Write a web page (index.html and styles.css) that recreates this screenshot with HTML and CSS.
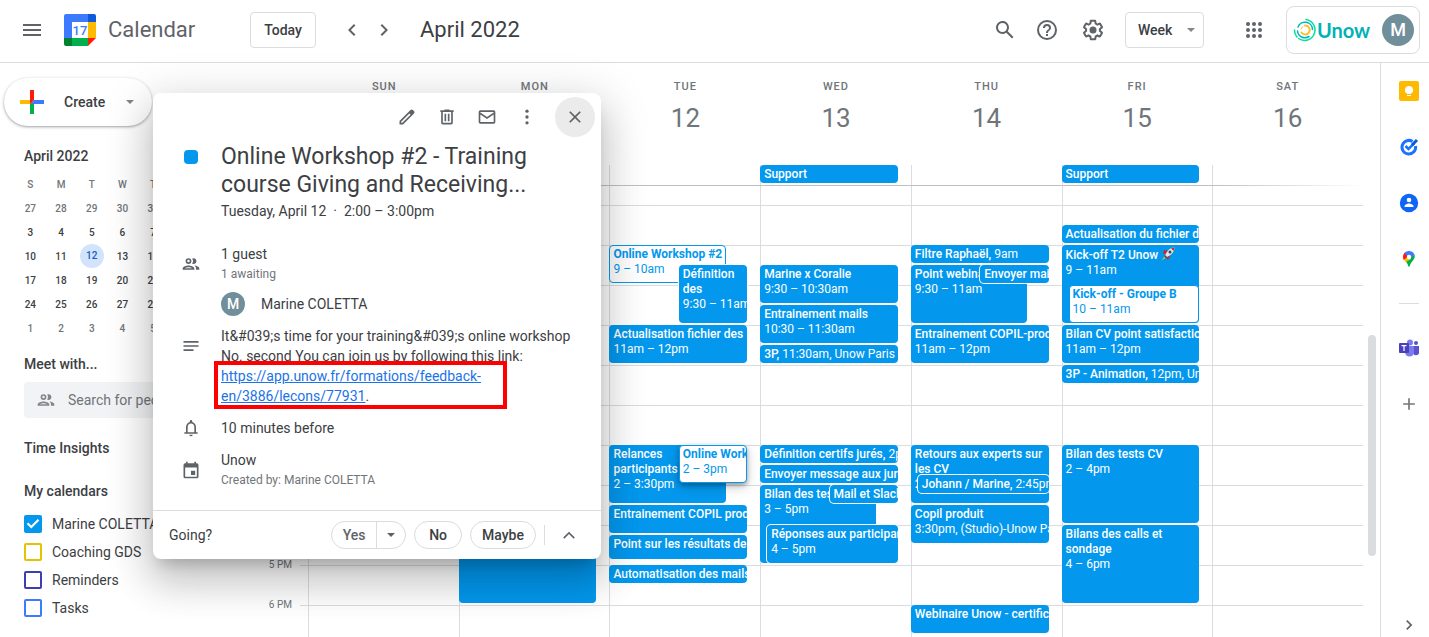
FILE: index.html
```html
<!DOCTYPE html>
<html lang="en">
<head>
    <meta charset="utf-8">
    <title>Calendar - April 2022</title>
    <link rel="stylesheet" href="styles.css">
</head>
<body>
    <header class="topbar">
        <button class="icon-btn" aria-label="Main menu"><svg width="24" height="24" viewBox="0 0 24 24"><path d="M3 18h18v-2H3v2zm0-5h18v-2H3v2zm0-7v2h18V6H3z"/></svg></button>
        <svg class="logo" width="32" height="32" viewBox="0 0 32 32">
            <path fill="#3c7bff" d="M2 0h22v8H8v16H0V2a2 2 0 0 1 2-2z"/>
            <path fill="#0d5bd9" d="M24 0h6a2 2 0 0 1 2 2v6h-8z"/>
            <path fill="#ffba00" d="M24 8h8v16h-8z"/>
            <path fill="#00b04c" d="M8 24h16v8H8z"/>
            <path fill="#00822e" d="M0 24h8v8H2a2 2 0 0 1-2-2z"/>
            <path fill="#ff1a0a" d="M24 24h8l-8 8z"/>
            <path fill="#fff" d="M8 8h16v16H8z"/>
            <text class="logo-day" x="16" y="21" text-anchor="middle">17</text>
        </svg>
        <span class="brand">Calendar</span>
        <button class="box-btn today">Today</button>
        <button class="icon-btn prev" aria-label="Previous week"><svg width="24" height="24" viewBox="0 0 24 24"><path d="M15.400 7.400 14 6l-6 6 6 6 1.400-1.400L10.800 12z"/></svg></button>
        <button class="icon-btn" aria-label="Next week"><svg width="24" height="24" viewBox="0 0 24 24"><path d="M10 6 8.600 7.400 13.200 12l-4.600 4.600L10 18l6-6z"/></svg></button>
        <h1 class="month">April 2022</h1>
        <div class="tools">
            <button class="icon-btn" aria-label="Search"><svg width="24" height="24" viewBox="0 0 24 24"><path d="M20.490 19l-5.730-5.730A6.500 6.500 0 1 0 13.270 14.760L19 20.490 20.490 19zM5 9.500a4.500 4.500 0 1 1 9 0 4.500 4.500 0 0 1-9 0z"/></svg></button>
            <button class="icon-btn help" aria-label="Support"><svg width="24" height="24" viewBox="0 0 24 24"><path d="M11 18h2v-2h-2v2zm1-16a10 10 0 1 0 0 20 10 10 0 0 0 0-20zm0 18a8 8 0 1 1 0-16 8 8 0 0 1 0 16zm0-14a4 4 0 0 0-4 4h2a2 2 0 1 1 4 0c0 2-3 1.750-3 5h2c0-2.250 3-2.500 3-5a4 4 0 0 0-4-4z"/></svg></button>
            <button class="icon-btn gear" aria-label="Settings"><svg width="24" height="24" viewBox="0 0 24 24"><path d="M13.850 22.250h-3.700c-.74 0-1.360-.54-1.450-1.270l-.27-1.890c-.27-.14-.53-.29-.79-.46l-1.800.72c-.7.26-1.470-.03-1.810-.65L2.200 15.530c-.35-.66-.2-1.440.36-1.880l1.530-1.190c-.01-.15-.02-.3-.02-.46 0-.15.01-.31.02-.46l-1.520-1.190c-.59-.45-.74-1.260-.37-1.880l1.850-3.190c.34-.62 1.110-.9 1.790-.63l1.810.73c.26-.17.52-.32.78-.46l.27-1.910c.09-.7.71-1.250 1.440-1.250h3.700c.74 0 1.360.54 1.450 1.270l.27 1.890c.27.14.53.29.79.46l1.800-.72c.71-.26 1.480.03 1.820.65l1.840 3.180c.36.66.2 1.440-.36 1.880l-1.520 1.190c.01.15.02.3.02.46s-.01.31-.02.46l1.520 1.190c.56.45.72 1.230.37 1.860l-1.860 3.220c-.34.62-1.110.9-1.800.63l-1.800-.72c-.26.17-.52.32-.78.46l-.27 1.910c-.1.680-.72 1.220-1.460 1.220zm-3.230-2h2.760l.37-2.550.53-.22c.44-.18.88-.44 1.340-.78l.45-.34 2.380.96 1.380-2.400-2.030-1.580.07-.56c.03-.26.06-.51.06-.78s-.03-.53-.06-.78l-.07-.56 2.030-1.580-1.390-2.400-2.390.96-.45-.35c-.42-.32-.87-.58-1.330-.77l-.52-.22-.37-2.550h-2.760l-.37 2.550-.53.210c-.44.190-.88.440-1.340.790l-.45.330-2.380-.95-1.390 2.390 2.030 1.580-.07.560a7 7 0 0 0-.06.790c0 .260.020.530.060.780l.07.560-2.030 1.580 1.380 2.400 2.390-.96.45.350c.430.330.860.580 1.330.770l.53.220z"/><circle cx="12" cy="12" r="3.500"/></svg></button>
            <div class="view">
                <select aria-label="View"><option>Week</option><option>Day</option><option>Month</option></select>
                <i class="caret"></i>
            </div>
            <button class="icon-btn apps" aria-label="Google apps"><svg width="24" height="24" viewBox="0 0 24 24"><circle cx="6" cy="6" r="2"/><circle cx="12" cy="6" r="2"/><circle cx="18" cy="6" r="2"/><circle cx="6" cy="12" r="2"/><circle cx="12" cy="12" r="2"/><circle cx="18" cy="12" r="2"/><circle cx="6" cy="18" r="2"/><circle cx="12" cy="18" r="2"/><circle cx="18" cy="18" r="2"/></svg></button>
            <div class="account">
                <svg width="24" height="24" viewBox="0 0 24 24" fill="none" stroke-linecap="round">
                    <path stroke="#00e0a8" stroke-width="1.500" d="M13 1.500A10.500 10.500 0 1 1 5.500 20.500M1.500 12a10.500 10.500 0 0 0 2.500 7"/>
                    <path stroke="#00b5b8" stroke-width="1.500" d="M5 9a7.500 7.500 0 0 1 14.500 2.500M4.500 13A7.500 7.500 0 0 0 16 18.500"/>
                    <path stroke="#fbc02d" stroke-width="2" d="M12 7.500a4.500 4.500 0 1 1-3.500 7"/>
                    <path stroke="#fbc02d" stroke-width="1" d="M8 11a4 4 0 0 1 2-2.500"/>
                </svg>
                <span class="org">Unow</span>
                <span class="avatar big">M</span>
            </div>
        </div>
    </header>

    <main class="layout">
        <aside class="sidebar">
            <button class="create">
                <svg width="36" height="36" viewBox="0 0 36 36"><path fill="#00b04c" d="M16 16v14h4V20z"/><path fill="#3c7bff" d="M30 16H20l-4 4h14z"/><path fill="#ffba00" d="M6 16v4h10l4-4z"/><path fill="#ff1a0a" d="M20 16V6h-4v14z"/></svg>
                <span>Create</span>
                <i class="caret"></i>
            </button>
            <h2 class="side-title">April 2022</h2>
            <table class="mini">
                <tr><th>S</th><th>M</th><th>T</th><th>W</th><th>T</th><th>F</th><th>S</th></tr>
                <tr class="out"><td>27</td><td>28</td><td>29</td><td>30</td><td>31</td><td class="in">1</td><td class="in">2</td></tr>
                <tr><td>3</td><td>4</td><td>5</td><td>6</td><td>7</td><td>8</td><td>9</td></tr>
                <tr><td>10</td><td>11</td><td><span class="selected">12</span></td><td>13</td><td>14</td><td>15</td><td>16</td></tr>
                <tr><td>17</td><td>18</td><td>19</td><td>20</td><td>21</td><td>22</td><td>23</td></tr>
                <tr><td>24</td><td>25</td><td>26</td><td>27</td><td>28</td><td>29</td><td>30</td></tr>
                <tr class="out"><td>1</td><td>2</td><td>3</td><td>4</td><td>5</td><td>6</td><td>7</td></tr>
            </table>
            <h2 class="side-title meet">Meet with...</h2>
            <label class="people">
                <svg width="20" height="20" viewBox="0 0 24 24"><path d="M9 13.750c-2.340 0-7 1.170-7 3.500V19h14v-1.750c0-2.330-4.660-3.500-7-3.500zM4.340 17c.84-.58 2.870-1.250 4.660-1.250s3.820.67 4.660 1.250H4.340zM9 12a3.500 3.500 0 1 0 0-7 3.500 3.500 0 0 0 0 7zm0-5a1.500 1.500 0 1 1 0 3 1.500 1.500 0 0 1 0-3zm7.040 6.810c1.160.84 1.960 1.960 1.960 3.440V19h4v-1.750c0-2.020-3.500-3.170-5.960-3.440zM15 12a3.500 3.500 0 1 0-1.500-6.660 5.500 5.500 0 0 1 0 6.320c.46.210.97.340 1.500.340z"/></svg>
                <input type="text" placeholder="Search for people" aria-label="Search for people">
            </label>
            <h2 class="side-title insights">Time Insights</h2>
            <h2 class="side-title mine">My calendars</h2>
            <label class="cal blue"><input type="checkbox" checked>Marine COLETTA</label>
            <label class="cal yellow"><input type="checkbox">Coaching GDS</label>
            <label class="cal indigo"><input type="checkbox">Reminders</label>
            <label class="cal sky"><input type="checkbox">Tasks</label>
        </aside>

        <section class="week">
            <div class="day-heads">
                <div><span>SUN</span>10</div>
                <div><span>MON</span>11</div>
                <div><span>TUE</span>12</div>
                <div><span>WED</span>13</div>
                <div><span>THU</span>14</div>
                <div><span>FRI</span>15</div>
                <div><span>SAT</span>16</div>
            </div>
            <div class="allday">
                <div></div>
                <div></div>
                <div></div>
                <div><p class="event">Support</p></div>
                <div></div>
                <div><p class="event">Support</p></div>
                <div></div>
            </div>
            <div class="timed">
                <div class="hours">
                    <span>8 AM</span><span>9 AM</span><span>10 AM</span><span>11 AM</span><span>12 PM</span><span>1 PM</span><span>2 PM</span><span>3 PM</span><span>4 PM</span><span>5 PM</span><span>6 PM</span>
                </div>
                <!-- one grid row is 15 minutes, row 3 is 8:00 -->
                <div class="days">
                    <div class="day"></div>
                    <div class="day">
                        <div class="event" style="grid-row: 27 / span 16"></div>
                    </div>
                    <div class="day">
                        <div class="event open wide" style="grid-row: 7 / span 4"><b>Online Workshop #2</b><br>9 – 10am</div>
                        <div class="event half over" style="grid-row: 9 / span 6"><b>Définition<br>des</b><br>9:30 – 11am</div>
                        <div class="event" style="grid-row: 15 / span 4"><b>Actualisation fichier des</b><br>11am – 12pm</div>
                        <div class="event wide" style="grid-row: 27 / span 6"><b>Relances<br>participants</b><br>2 – 3:30pm</div>
                        <div class="event open half lifted" style="grid-row: 27 / span 4"><b>Online Workshop #2</b><br>2 – 3pm</div>
                        <div class="event" style="grid-row: 33 / span 3"><b>Entrainement COPIL prod</b></div>
                        <div class="event forty-min" style="grid-row: 36 / span 3"><b>Point sur les résultats de</b></div>
                        <div class="event" style="grid-row: 39 / span 2"><b>Automatisation des mails</b></div>
                    </div>
                    <div class="day">
                        <div class="event" style="grid-row: 9 / span 4"><b>Marine x Coralie</b><br>9:30 – 10:30am</div>
                        <div class="event" style="grid-row: 13 / span 4"><b>Entrainement mails</b><br>10:30 – 11:30am</div>
                        <div class="event" style="grid-row: 17 / span 2"><b>3P,</b> 11:30am, Unow Paris</div>
                        <div class="event" style="grid-row: 27 / span 2"><b>Définition certifs jurés,</b> 2pm</div>
                        <div class="event" style="grid-row: 29 / span 2"><b>Envoyer message aux jurés</b></div>
                        <div class="event wide" style="grid-row: 31 / span 8"><b>Bilan des tests</b><br>3 – 5pm</div>
                        <div class="event half over" style="grid-row: 31 / span 2"><b>Mail et Slack</b></div>
                        <div class="event inset over" style="grid-row: 35 / span 4"><b>Réponses aux participants</b><br>4 – 5pm</div>
                    </div>
                    <div class="day">
                        <div class="event" style="grid-row: 7 / span 2"><b>Filtre Raphaël,</b> 9am</div>
                        <div class="event wide" style="grid-row: 9 / span 6"><b>Point webinaire</b><br>9:30 – 11am</div>
                        <div class="event half over" style="grid-row: 9 / span 2"><b>Envoyer mails</b></div>
                        <div class="event" style="grid-row: 15 / span 4"><b>Entrainement COPIL-prod</b><br>11am – 12pm</div>
                        <div class="event" style="grid-row: 27 / span 6"><b>Retours aux experts sur<br>les CV</b><br>2 – 3:30pm</div>
                        <div class="event inset over" style="grid-row: 30 / span 2"><b>Johann / Marine,</b> 2:45pm</div>
                        <div class="event" style="grid-row: 33 / span 4"><b>Copil produit</b><br>3:30pm, (Studio)-Unow Paris</div>
                        <div class="event" style="grid-row: 43 / span 3"><b>Webinaire Unow - certification</b></div>
                    </div>
                    <div class="day">
                        <div class="event" style="grid-row: 5 / span 2"><b>Actualisation du fichier des</b></div>
                        <div class="event" style="grid-row: 7 / span 8"><b>Kick-off T2 Unow <svg class="rocket" width="14" height="14" viewBox="0 0 14 14"><path fill="#c62828" d="M3 6 6 3l3 6-2 4zM6 4 2 7l1-4z"/><path fill="#dfe6ea" d="M13.500.5C9 .5 6 4 4 8.500L6 10c4-2 7.500-5 7.500-9.500z"/><path fill="#c62828" d="M13.500.5 10 1.500l2.500 2.500z"/><circle cx="9" cy="5" r="1.500" fill="#37474f"/><path fill="#fbc02d" d="M4 9 .5 13.500 5 10.500z"/><path fill="#455a64" d="m4 8 2.500 2.500L5 11.500 3 9z"/></svg></b><br>9 – 11am</div>
                        <div class="event open inset" style="grid-row: 11 / span 4"><b>Kick-off - Groupe B</b><br>10 – 11am</div>
                        <div class="event" style="grid-row: 15 / span 4"><b>Bilan CV point satisfaction</b><br>11am – 12pm</div>
                        <div class="event" style="grid-row: 19 / span 2"><b>3P - Animation,</b> 12pm, Unow</div>
                        <div class="event" style="grid-row: 27 / span 8"><b>Bilan des tests CV</b><br>2 – 4pm</div>
                        <div class="event" style="grid-row: 35 / span 8"><b>Bilans des calls et<br>sondage</b><br>4 – 6pm</div>
                    </div>
                    <div class="day"></div>
                </div>
                <div class="track"><div class="thumb"></div></div>
            </div>
        </section>

        <nav class="rail">
            <button aria-label="Keep"><svg width="20" height="20" viewBox="0 0 20 20"><rect width="20" height="20" rx="2" fill="#ffba00"/><path fill="#fff" d="M10 5a4 4 0 0 0-2 7.500V13h4v-.5A4 4 0 0 0 10 5zM8 14h4v1H8z"/></svg></button>
            <button aria-label="Tasks"><svg width="20" height="20" viewBox="0 0 20 20" fill="none"><path stroke="#1a73ff" stroke-width="3" d="M13.500 4.500A6.800 6.800 0 1 0 16.500 9"/><path stroke="#1a73ff" stroke-width="2.500" d="m6.500 9 3 3 6-6"/><path stroke="#0d5bd9" stroke-width="3" d="m13 8 5-5"/></svg></button>
            <button aria-label="Contacts"><svg width="20" height="20" viewBox="0 0 20 20"><circle cx="10" cy="10" r="9.200" fill="#0d66f5"/><circle cx="10" cy="7" r="2.300" fill="#fff"/><path fill="#fff" d="M5.500 13.500c0-2 3-3 4.500-3s4.500 1 4.500 3v.5h-9z"/></svg></button>
            <button aria-label="Maps"><svg width="20" height="20" viewBox="0 0 20 20"><path fill="#00b04c" d="M15.500 5.500c1.500 5-3.500 6.500-4.700 11.500-.3 1-1.300 1-1.600 0-.5-2-1.500-3.500-2.700-5z"/><path fill="#ffba00" d="M4.500 9.500 8 6l4 4-5 3c-1-1.200-2-2.200-2.500-3.500z"/><path fill="#ff1a0a" d="m5.500 3.800 4 3.200-4.800 4C3.500 8.500 4 5.500 5.500 3.800z"/><path fill="#3c7bff" d="M5.500 3.800C8 1 13.500 1 15.500 5.500L11 10 8 7z"/><circle cx="10" cy="8" r="2.200" fill="#fff"/></svg></button>
            <hr>
            <button aria-label="Teams"><svg width="20" height="20" viewBox="0 0 20 20"><circle cx="17" cy="5" r="2" fill="#5059c9"/><path fill="#5b51d0" d="M14 8h6v5a3 3 0 0 1-6 2z"/><circle cx="11" cy="4.500" r="3" fill="#7b7bf0"/><path fill="#7b7bf0" d="M6 8h9v6a4.500 4.500 0 0 1-9 0z"/><rect y="5" width="10" height="10" rx="1" fill="#4b3fbc"/><path fill="#fff" d="M2.500 7h5v1.200H5.600V13H4.400V8.200H2.500z"/></svg></button>
            <button aria-label="Get add-ons"><svg width="20" height="20" viewBox="0 0 24 24"><path fill="#777" d="M19 13h-6v6h-2v-6H5v-2h6V5h2v6h6v2z"/></svg></button>
            <button class="collapse" aria-label="Hide side panel"><svg width="20" height="20" viewBox="0 0 24 24"><path d="M10 6 8.600 7.400 13.200 12l-4.600 4.600L10 18l6-6z"/></svg></button>
        </nav>
    </main>

    <div class="popup" role="dialog">
        <div class="popup-tools">
            <button class="icon-btn" aria-label="Edit event"><svg width="20" height="20" viewBox="0 0 24 24"><path d="M20.400 4.940l-1.340-1.340a2.050 2.050 0 0 0-2.900 0L3 16.770V21h4.230L20.400 7.840a2.050 2.050 0 0 0 0-2.900zM6.410 19H5v-1.410l9.830-9.830 1.410 1.410L6.410 19z"/></svg></button>
            <button class="icon-btn" aria-label="Delete event"><svg width="20" height="20" viewBox="0 0 24 24"><path d="M15 4V3H9v1H4v2h1v13a2 2 0 0 0 2 2h10a2 2 0 0 0 2-2V6h1V4h-5zm2 15H7V6h10v13zM9 8h2v9H9zm4 0h2v9h-2z"/></svg></button>
            <button class="icon-btn" aria-label="Email guests"><svg width="20" height="20" viewBox="0 0 24 24"><path d="M20 4H4a2 2 0 0 0-2 2v12a2 2 0 0 0 2 2h16a2 2 0 0 0 2-2V6a2 2 0 0 0-2-2zm0 2v.5L12 12 4 6.500V6h16zM4 18V9l8 5.500L20 9v9H4z"/></svg></button>
            <button class="icon-btn" aria-label="Options"><svg width="20" height="20" viewBox="0 0 24 24"><circle cx="12" cy="5" r="2"/><circle cx="12" cy="12" r="2"/><circle cx="12" cy="19" r="2"/></svg></button>
            <button class="icon-btn close" aria-label="Close"><svg width="20" height="20" viewBox="0 0 24 24"><path d="M19 6.400 17.600 5 12 10.600 6.400 5 5 6.400 10.600 12 5 17.600 6.400 19 12 13.400 17.600 19 19 17.600 13.400 12z"/></svg></button>
        </div>
        <div class="row">
            <i class="swatch"></i>
            <div>
                <h2 class="title">Online Workshop #2 - Training<br>course Giving and Receiving...</h2>
                <p class="when">Tuesday, April 12 &nbsp;·&nbsp; 2:00 – 3:00pm</p>
            </div>
        </div>
        <div class="row guests">
            <svg width="20" height="20" viewBox="0 0 24 24"><path d="M9 13.750c-2.340 0-7 1.170-7 3.500V19h14v-1.750c0-2.330-4.660-3.500-7-3.500zM4.340 17c.84-.58 2.870-1.250 4.660-1.250s3.820.67 4.660 1.250H4.340zM9 12a3.500 3.500 0 1 0 0-7 3.500 3.500 0 0 0 0 7zm0-5a1.500 1.500 0 1 1 0 3 1.500 1.500 0 0 1 0-3zm7.040 6.810c1.160.84 1.960 1.960 1.960 3.440V19h4v-1.750c0-2.020-3.500-3.170-5.960-3.440zM15 12a3.500 3.500 0 1 0-1.500-6.660 5.500 5.500 0 0 1 0 6.320c.46.210.97.340 1.500.340z"/></svg>
            <div>
                <p>1 guest</p>
                <p class="small">1 awaiting</p>
            </div>
        </div>
        <div class="guest"><span class="avatar">M</span>Marine COLETTA</div>
        <div class="row notes">
            <svg width="20" height="20" viewBox="0 0 24 24"><path d="M3 6h18v2H3zm0 5h18v2H3zm0 5h12v2H3z"/></svg>
            <div>
                <p>It&amp;#039;s time for your training&amp;#039;s online workshop<br>No. second You can join us by following this link:</p>
                <p class="marked"><a href="#">https://app.unow.fr/formations/feedback-<br>en/3886/lecons/77931</a>.</p>
            </div>
        </div>
        <div class="row remind">
            <svg width="20" height="20" viewBox="0 0 24 24"><path d="M18 17v-6c0-3.070-1.630-5.640-4.500-6.320V4a1.500 1.500 0 0 0-3 0v.68C7.640 5.360 6 7.920 6 11v6H4v2h16v-2h-2zm-2 0H8v-6c0-2.480 1.510-4.500 4-4.500s4 2.020 4 4.500v6zm-4 5a2 2 0 0 0 2-2h-4a2 2 0 0 0 2 2z"/></svg>
            <p>10 minutes before</p>
        </div>
        <div class="row owner">
            <svg width="20" height="20" viewBox="0 0 24 24"><path d="M19 4h-1V2h-2v2H8V2H6v2H5a2 2 0 0 0-2 2v14a2 2 0 0 0 2 2h14a2 2 0 0 0 2-2V6a2 2 0 0 0-2-2zm0 16H5V9h14v11zm-7-7h5v5h-5z"/></svg>
            <div>
                <p>Unow</p>
                <p class="small">Created by: Marine COLETTA</p>
            </div>
        </div>
        <div class="rsvp">
            <span>Going?</span>
            <div class="split">
                <button>Yes</button>
                <button aria-label="More answers"><i class="caret"></i></button>
            </div>
            <button class="pill">No</button>
            <button class="pill">Maybe</button>
            <i class="bar"></i>
            <button class="icon-btn" aria-label="More options"><svg width="20" height="20" viewBox="0 0 24 24"><path d="m12 8-7 7 1.400 1.400L12 10.800l5.600 5.600L19 15z"/></svg></button>
        </div>
    </div>
</body>
</html>
```
FILE: styles.css
```css
*, *::before, *::after {
    box-sizing: border-box;
}
body {
    margin: 0;
    height: 100vh;
    overflow: hidden;
    display: flex;
    flex-direction: column;
    font-family: Roboto, "Liberation Sans", sans-serif;
    font-size: 14px;
    color: #3c4043;
    background: #fff;
}
h1, h2, p {
    margin: 0;
    font-weight: 400;
}
button, input, select {
    font: inherit;
    color: inherit;
    border: 0;
    padding: 0;
    background: none;
}
svg {
    display: block;
    flex: none;
}
.icon-btn {
    display: flex;
    align-items: center;
    justify-content: center;
    width: 32px;
    height: 32px;
    flex: none;
}
.icon-btn svg, .row svg, .collapse svg {
    fill: #5f6368;
}
.caret {
    border: 4px solid transparent;
    border-top-color: #80868b;
    border-bottom: 0;
}

/* top bar */
.topbar {
    display: flex;
    align-items: center;
    height: 63px;
    flex: none;
    padding: 0 9px 3px 16px;
    border-bottom: 1px solid #dadce0;
}
.logo {
    margin-left: 16px;
}
.logo-day {
    font-size: 13px;
    font-weight: 500;
    fill: #3c7bff;
}
.brand {
    margin-left: 12px;
    width: 142px;
    font-size: 22px;
    color: #5f6368;
}
.box-btn {
    height: 36px;
    border: 1px solid #dadce0;
    border-radius: 4px;
    font-weight: 500;
}
.today {
    width: 66px;
}
.prev {
    margin-left: 20px;
}
.month {
    margin-left: 20px;
    font-size: 22px;
}
.tools {
    display: flex;
    align-items: center;
    margin-left: auto;
}
.help {
    margin-left: 10px;
}
.gear {
    margin-left: 14px;
}
.view {
    display: flex;
    align-items: center;
    height: 36px;
    width: 79px;
    margin-left: 16px;
    padding-right: 8px;
    border: 1px solid #dadce0;
    border-radius: 4px;
    font-weight: 500;
}
.view select {
    appearance: none;
    flex: 1;
    padding-left: 12px;
    height: 34px;
}
.apps {
    margin: 0 16px 0 34px;
}
.account {
    display: flex;
    align-items: center;
    height: 48px;
    width: 134px;
    padding: 0 5px 0 6px;
    border: 1px solid #dadce0;
    border-radius: 8px;
}
.org {
    flex: 1;
    font-family: Lato, sans-serif;
    font-size: 20px;
    font-weight: 700;
    color: #00b2b5;
}
.avatar {
    display: flex;
    align-items: center;
    justify-content: center;
    width: 24px;
    height: 24px;
    border-radius: 50%;
    background: #718f9b;
    color: #fff;
    font-weight: 500;
}
.avatar.big {
    width: 32px;
    height: 32px;
    font-size: 18px;
}

.layout {
    display: flex;
    flex: 1;
    min-height: 0;
}

/* left column */
.sidebar {
    width: 256px;
    flex: none;
    padding: 15px 24px 0;
}
.create {
    display: flex;
    align-items: center;
    width: 148px;
    height: 48px;
    margin-left: -20px;
    padding: 0 18px 0 10px;
    border-radius: 24px;
    box-shadow: 0 1px 2px rgba(60, 64, 67, .3), 0 1px 3px 1px rgba(60, 64, 67, .15);
    font-weight: 500;
}
.create span {
    flex: 1;
    margin-left: 14px;
    text-align: left;
}
.side-title {
    font-size: 14px;
    line-height: 20px;
    font-weight: 500;
}
.create + .side-title {
    margin-top: 20px;
}
.mini {
    table-layout: fixed;
    width: 215px;
    margin: 6px 0 0 -9px;
    border-collapse: collapse;
    font-size: 10px;
}
.mini th, .mini td {
    height: 24px;
    padding: 0;
    text-align: center;
    font-weight: 500;
}
.mini th, .mini .out td {
    color: #70757a;
}
.mini .out .in {
    color: #3c4043;
}
.selected {
    display: block;
    width: 24px;
    margin: 0 auto;
    line-height: 24px;
    border-radius: 50%;
    background: #d2e3fc;
    color: #185abc;
}
.meet {
    margin-top: 14px;
}
.people {
    display: flex;
    align-items: center;
    height: 36px;
    margin-top: 8px;
    padding-left: 12px;
    border-radius: 4px;
    background: #f1f3f4;
}
.people svg {
    fill: #80868b;
}
.people input {
    width: 160px;
    margin-left: 12px;
}
.people input::placeholder {
    color: #70757a;
}
.insights {
    margin-top: 20px;
}
.mine {
    margin: 23px 0 9px;
}
.cal {
    display: flex;
    align-items: center;
    height: 28px;
}
.cal input {
    appearance: none;
    width: 18px;
    height: 18px;
    margin: 0 10px 0 0;
    border: 2px solid;
    border-radius: 2px;
}
.blue input { border-color: #0398ee; }
.yellow input { border-color: #e4c400; }
.indigo input { border-color: #3f3fb5; }
.sky input { border-color: #3c7bff; }
.cal input:checked {
    background: #0398ee;
}
.cal input:checked::before {
    content: "";
    display: block;
    height: 14px;
    background: #fff;
    clip-path: polygon(5% 50%, 16% 39%, 38% 61%, 84% 14%, 95% 25%, 38% 83%);
}

/* week grid */
.week {
    display: flex;
    flex-direction: column;
    flex: 1;
    min-width: 0;
}
.day-heads, .allday {
    display: grid;
    grid-template-columns: repeat(7, 1fr);
    flex: none;
    margin: 0 17px 0 52px;
}
.day-heads {
    height: 102px;
    padding: 17px 0 0 1px;
    text-align: center;
    font-size: 26px;
    line-height: 32px;
    color: #70757a;
}
.day-heads span {
    display: block;
    margin-bottom: 8px;
    font-size: 11px;
    line-height: 14px;
    font-weight: 500;
    letter-spacing: 1px;
}
.allday {
    height: 21px;
    border-bottom: 1px solid;
    border-image: linear-gradient(to right, #bdc1c6 86%, #fff) 1;
}
.allday > div, .day {
    min-width: 0;
    padding-right: 13px;
    border-left: 1px solid #dadce0;
}
.allday .event {
    height: 18px;
    font-weight: 500;
}
.timed {
    display: flex;
    flex: 1;
    min-height: 0;
}
.hours {
    width: 44px;
    padding: 11px 8px 0 0;
    text-align: right;
    font-size: 10px;
    color: #70757a;
}
.hours span {
    display: block;
    height: 40px;
    line-height: 16px;
}
.days {
    display: grid;
    grid-template-columns: repeat(7, 1fr);
    flex: 1;
    padding-left: 8px;
    background: linear-gradient(#dadce0 1px, transparent 1px) 0 19px / 100% 40px;
}
.day {
    display: grid;
    grid-template-columns: 100%;
    grid-template-rows: 9px;
    grid-auto-rows: 10px;
}
.event {
    grid-column: 1;
    margin: 0 0 2px -1px;
    padding: 2px 0 0 4px;
    overflow: hidden;
    white-space: nowrap;
    border-radius: 4px;
    background: #0398ee;
    color: #fff;
    font-size: 12px;
    line-height: 15px;
}
.event b {
    font-weight: 500;
}
.wide {
    width: 85%;
}
.half {
    width: 50%;
    justify-self: end;
}
.inset {
    margin-left: 6px;
}
.over {
    box-shadow: 0 0 0 1px #fff;
}
.open {
    padding: 1px 0 0 3px;
    border: 1px solid #0398ee;
    background: #fff;
    color: #0398ee;
}
.open b {
    font-weight: 700;
}
.lifted {
    box-shadow: 0 2px 4px rgba(0, 0, 0, .3), 0 4px 12px rgba(0, 0, 0, .2);
}
.forty-min {
    height: 24px;
}
.rocket {
    display: inline;
    vertical-align: -2px;
}
.track {
    width: 17px;
    padding-left: 5px;
}
.thumb {
    width: 8px;
    height: 49%;
    margin-top: 149px;
    border-radius: 4px;
    background: #dadce0;
}

/* right icon rail */
.rail {
    display: flex;
    flex-direction: column;
    align-items: center;
    width: 49px;
    flex: none;
    padding: 18px 0 2px 8px;
    border-left: 1px solid #dadce0;
}
.rail button {
    height: 20px;
    margin-bottom: 36px;
}
.rail hr {
    width: 20px;
    margin: -2px 0 34px;
    border: 0;
    border-top: 1px solid #dadce0;
}
.rail .collapse {
    margin: auto 0 0;
}

/* event details */
.popup {
    position: absolute;
    left: 153px;
    top: 93px;
    width: 448px;
    border-radius: 8px;
    background: #fff;
    box-shadow: 0 24px 38px 3px rgba(0, 0, 0, .14), 0 9px 46px 8px rgba(0, 0, 0, .12), 0 11px 15px -7px rgba(0, 0, 0, .2);
    line-height: 20px;
}
.popup-tools {
    display: flex;
    align-items: center;
    justify-content: flex-end;
    gap: 8px;
    height: 48px;
    padding-right: 6px;
}
.close {
    width: 40px;
    height: 40px;
    margin-left: 4px;
    border-radius: 50%;
    background: #ebebeb;
}
.row {
    display: grid;
    grid-template-columns: 40px 1fr;
    align-items: center;
    padding: 0 16px 0 28px;
}
.swatch {
    width: 14px;
    height: 14px;
    margin: 9px 0 0 3px;
    align-self: start;
    border-radius: 4px;
    background: #0398ee;
}
.title {
    padding-top: 2px;
    font-size: 23px;
    line-height: 28px;
}
.when {
    margin-top: 2px;
}
.guests {
    margin-top: 23px;
}
.small {
    font-size: 12px;
    color: #70757a;
}
.guest {
    display: flex;
    align-items: center;
    gap: 16px;
    margin: 8px 0 10px 68px;
}
.notes > svg {
    align-self: start;
    margin-top: 10px;
}
.marked {
    position: relative;
}
.marked::after {
    content: "";
    position: absolute;
    top: -5px;
    left: -7px;
    width: 293px;
    height: 48px;
    border: 4px solid #f00;
    pointer-events: none;
}
.marked a {
    color: #1a73e8;
}
.remind {
    margin-top: 12px;
}
.owner {
    margin-top: 12px;
}
.rsvp {
    display: flex;
    align-items: center;
    gap: 8px;
    height: 49px;
    margin-top: 20px;
    padding: 0 16px;
    border-top: 1px solid #dadce0;
}
.rsvp > span {
    flex: 1;
}
.split, .pill {
    display: flex;
    align-items: center;
    justify-content: center;
    height: 28px;
    border: 1px solid #dadce0;
    border-radius: 14px;
    font-weight: 500;
}
.split {
    width: 75px;
    color: #5f6368;
}
.split button:first-child {
    width: 45px;
    height: 26px;
    border-right: 1px solid #dadce0;
}
.split button:last-child {
    flex: 1;
    display: flex;
    justify-content: center;
}
.split .caret {
    border-top-color: #5f6368;
}
.pill {
    padding: 0 11px;
}
.pill:nth-of-type(1) {
    width: 48px;
}
.bar {
    width: 1px;
    height: 20px;
    background: #dadce0;
}
```
